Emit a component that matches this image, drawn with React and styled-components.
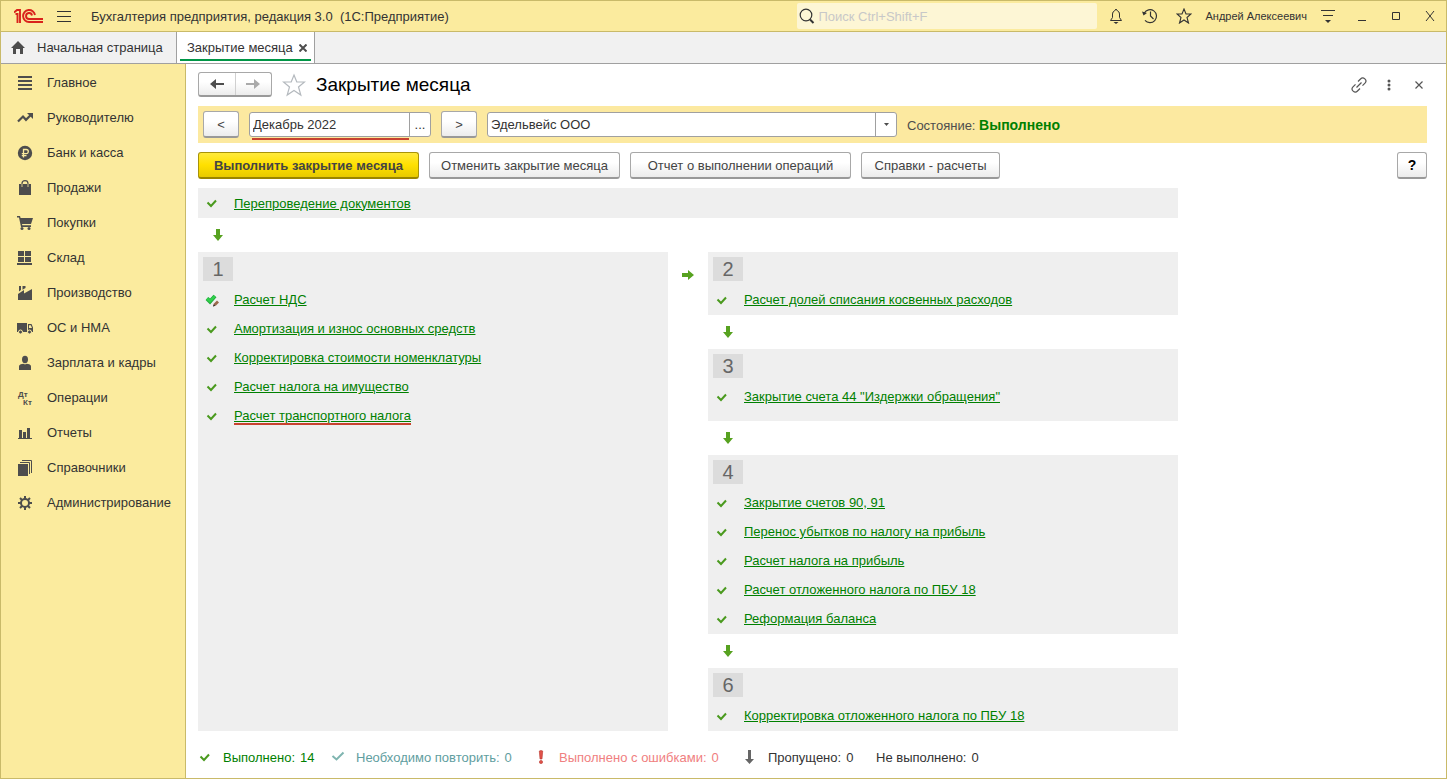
import React, { useState } from 'react';
import styled, { createGlobalStyle } from 'styled-components';

const GlobalStyle = createGlobalStyle`
  * {
    box-sizing: border-box;
  }

  body {
    margin: 0;
    font-family: "Liberation Sans", Arial, sans-serif;
    font-size: 13px;
    color: #333333;
    background: #ffffff;
  }

  button, input, select {
    font: inherit;
    color: inherit;
  }

  svg {
    display: block;
    flex: none;
  }
`;

const dark = '#4d4d4d';

const menuItems = [
  {
    title: 'Главное',
    icon: <path d="M1 1h14v2H1zM1 5h14v2H1zM1 9h14v2H1zM1 13h14v2H1z" />,
  },
  {
    title: 'Руководителю',
    icon: (
      <>
        <path d="M1 11.500L6 6.500L9 9.800L13.500 5.300" fill="none" stroke={dark} strokeWidth="2.200" />
        <path d="M10 3h6v6z" />
      </>
    ),
  },
  {
    title: 'Банк и касса',
    icon: (
      <>
        <circle cx="8" cy="8" r="7.200" />
        <path d="M6.500 12.500V4.500H9.200a2 2 0 0 1 0 4.200H4.800M4.800 10.600H9.500" fill="none" stroke="#fbeb9e" strokeWidth="1.300" />
      </>
    ),
  },
  {
    title: 'Продажи',
    icon: (
      <>
        <path d="M2 4h2v3h2V4h4v3h2V4h2v11H2z" />
        <path d="M5 7V3.500Q5 .7 8 .7t3 2.800V7" fill="none" stroke={dark} strokeWidth="1.200" />
      </>
    ),
  },
  {
    title: 'Покупки',
    icon: (
      <>
        <path d="M0 1h3l.6 2H16l-2 6H5l.3 1.300H14V12H4L2 2.500H0z" />
        <circle cx="5" cy="13.500" r="1.500" />
        <circle cx="12" cy="13.500" r="1.500" />
      </>
    ),
  },
  {
    title: 'Склад',
    icon: <path d="M1 1h6v5H1zM8 1h6v5H8zM1 7h6v5H1zM8 7h6v5H8zM0 13h15v2H0z" />,
  },
  {
    title: 'Производство',
    icon: <path d="M2 1h2v4l-2 1.500zM5.500 1h3v2l-3 1.800zM1 9l6-4v3.500L15 4v11H1z" />,
  },
  {
    title: 'ОС и НМА',
    icon: (
      <>
        <path d="M0 3h10v9H0zM11 4h3.500L16 7.500V12h-5z" />
        <path d="M12 5.200h1.800L15 8h-3z" fill="#fbeb9e" />
        <circle cx="3.500" cy="12" r="2" stroke="#fbeb9e" />
        <circle cx="12.500" cy="12" r="2" stroke="#fbeb9e" />
      </>
    ),
  },
  {
    title: 'Зарплата и кадры',
    icon: (
      <>
        <ellipse cx="8" cy="4.500" rx="3" ry="3.700" />
        <path d="M2 15v-3.500Q2 9.500 5 9l1.500-.3Q8 9.800 9.500 8.700L11 9q3 .5 3 2.500V15z" />
      </>
    ),
  },
  {
    title: 'Операции',
    icon: (
      <>
        <text x="1" y="7" fontSize="8" fontWeight="bold">Дт</text>
        <text x="6" y="15" fontSize="8" fontWeight="bold">Кт</text>
      </>
    ),
  },
  {
    title: 'Отчеты',
    icon: <path d="M2 5h3v8h1V7h3v6h1V3h3v10h2v1H1v-1h1z" />,
  },
  {
    title: 'Справочники',
    icon: (
      <>
        <path d="M1 4h10v12H1z" />
        <path d="M3 2.500h9.500V14M5 .5h9.500V13" fill="none" stroke={dark} />
      </>
    ),
  },
  {
    title: 'Администрирование',
    icon: (
      <>
        <circle cx="8" cy="8" r="4" fill="none" stroke={dark} strokeWidth="2" />
        <path
          d="M8 1v3M8 12v3M1 8h3M12 8h3M3 3l2 2M11 11l2 2M13 3l-2 2M5 11l-2 2"
          fill="none"
          stroke={dark}
          strokeWidth="2"
        />
      </>
    ),
  },
];

const firstStage = {
  number: 1,
  steps: [
    { title: 'Расчет НДС', edited: true },
    { title: 'Амортизация и износ основных средств' },
    { title: 'Корректировка стоимости номенклатуры' },
    { title: 'Расчет налога на имущество' },
    { title: 'Расчет транспортного налога', marked: true },
  ],
};

const nextStages = [
  { number: 2, steps: [{ title: 'Расчет долей списания косвенных расходов' }] },
  { number: 3, tall: true, steps: [{ title: 'Закрытие счета 44 "Издержки обращения"' }] },
  {
    number: 4,
    steps: [
      { title: 'Закрытие счетов 90, 91' },
      { title: 'Перенос убытков по налогу на прибыль' },
      { title: 'Расчет налога на прибыль' },
      { title: 'Расчет отложенного налога по ПБУ 18' },
      { title: 'Реформация баланса' },
    ],
  },
  { number: 6, steps: [{ title: 'Корректировка отложенного налога по ПБУ 18' }] },
];

const CheckIcon = ({ color = '#4a9a1e' }) => (
  <svg width="14" height="14" viewBox="0 0 14 14">
    <path d="M2.500 6.500L6 10L11 4.500" fill="none" stroke={color} strokeWidth="2" />
  </svg>
);

const RepeatIcon = () => (
  <svg width="14" height="14" viewBox="0 0 14 14">
    <path d="M1.500 6L5.500 9.500L12.500 2.500" fill="none" stroke="#7fb5b0" strokeWidth="2" />
  </svg>
);

const EditedIcon = () => (
  <svg width="14" height="14" viewBox="0 0 14 14">
    <path d="M2 5.500L5 8.500L10 3" fill="none" stroke="#1fa83a" strokeWidth="4" />
    <path d="M2 5.500L5 8.300L9.800 3.200" fill="none" stroke="#2fd04b" strokeWidth="2.500" />
    <path d="M8 13.500l1-3 3-3 2 2-3 3z" fill="#9b6a4d" />
    <path d="M8 13.500l.8-2.300 1.500 1.500z" fill="#333333" />
  </svg>
);

const ArrowDown = () => (
  <svg width="12" height="12" viewBox="0 0 12 12">
    <path d="M4 0h4v6h3L6 12L1 6h3z" fill="#57a220" />
  </svg>
);

const ArrowRight = () => (
  <svg width="12" height="12" viewBox="0 0 12 12">
    <path d="M0 4h6V1l6 5l-6 5V8H0z" fill="#57a220" />
  </svg>
);

const Logo = () => (
  <svg width="30" height="16" viewBox="0 0 30 16" fill="none" stroke="#d9231c">
    <path d="M0 4.500L3 2H6V15M1.500 6H3.500V15" strokeWidth="1.900" />
    <path d="M21 7A6 6 0 1 0 15 14H29" strokeWidth="1.900" />
    <path d="M18 7.500A3 3 0 1 0 15 11H29" strokeWidth="1.900" />
  </svg>
);

const Stage = ({ number, steps, tall }) => (
  <StagePanel $tall={tall}>
    <StageNumber>{number}</StageNumber>
    {steps.map(step => (
      <Step key={step.title}>
        {step.edited ? <EditedIcon /> : <CheckIcon />}
        <StepLink href="#" $marked={step.marked}>{step.title}</StepLink>
      </Step>
    ))}
  </StagePanel>
);

const App = () => {
  const [period, setPeriod] = useState('Декабрь 2022');

  return (
    <>
      <GlobalStyle />
      <Window>
        <TitleBar>
          <Logo />
          <IconButton aria-label="Меню" $size={16}>
            <svg width="14" height="11" viewBox="0 0 14 11" stroke="#333333">
              <path d="M0 .5h14M0 5.500h14M0 10.500h14" />
            </svg>
          </IconButton>
          <AppTitle>Бухгалтерия предприятия, редакция 3.0&nbsp; (1С:Предприятие)</AppTitle>
          <Search>
            <svg width="16" height="16" viewBox="0 0 16 16" fill="none" stroke="#333333">
              <circle cx="7" cy="7" r="5.800" strokeWidth="1.200" />
              <path d="M11 11.500l3.500 3.500" strokeWidth="2" />
            </svg>
            <input type="search" aria-label="Поиск" placeholder="Поиск Ctrl+Shift+F" />
          </Search>
          <TitleTools>
            <IconButton aria-label="Уведомления" $size={16}>
              <svg width="16" height="16" viewBox="0 0 16 16" fill="none" stroke="#333333">
                <path d="M2.500 12.500h11L11.500 9.500V6Q11.500 3.500 9.500 3L8 1L6.500 3Q4.500 3.500 4.500 6v3.500z" />
                <path d="M5.500 14h5L8 16z" fill="#333333" stroke="none" />
              </svg>
            </IconButton>
            <IconButton aria-label="История" $size={16}>
              <svg width="16" height="16" viewBox="0 0 16 16" fill="none" stroke="#333333" strokeWidth="1.200">
                <path d="M2.300 5A6.500 6.500 0 1 1 3 12.300M8.500 3.500V8l3 3" />
                <path d="M0 3.500L5 5L1.500 7.500z" fill="#333333" stroke="none" />
              </svg>
            </IconButton>
            <IconButton aria-label="Избранное" $size={16}>
              <svg width="16" height="16" viewBox="0 0 16 16" fill="none" stroke="#333333" strokeWidth="1.100">
                <path d="M8 1l2 5h5l-4 3.500 1.500 5.500L8 12l-4.500 3L5 9.500 1 6h5z" />
              </svg>
            </IconButton>
            <UserName>Андрей Алексеевич</UserName>
            <IconButton aria-label="Настройки" $size={16}>
              <svg width="16" height="14" viewBox="0 0 16 14">
                <path d="M1 1.500h14M3 6.500h10" stroke="#333333" />
                <path d="M5 11h6l-3 3z" fill="#333333" />
              </svg>
            </IconButton>
          </TitleTools>
          <WindowButtons>
            <IconButton aria-label="Свернуть" $size={16}>
              <svg width="10" height="10" viewBox="0 0 10 10">
                <path d="M1 9.500h8" stroke="#333333" />
              </svg>
            </IconButton>
            <IconButton aria-label="Развернуть" $size={16}>
              <svg width="10" height="10" viewBox="0 0 10 10">
                <path d="M1.500 1.500h7v7h-7z" fill="none" stroke="#333333" />
              </svg>
            </IconButton>
            <IconButton aria-label="Закрыть" $size={16}>
              <svg width="10" height="10" viewBox="0 0 10 10">
                <path d="M1 0l8 10M9 0L1 10" stroke="#333333" />
              </svg>
            </IconButton>
          </WindowButtons>
        </TitleBar>

        <Tabs>
          <Tab href="#">
            <svg width="14" height="13" viewBox="0 0 14 13">
              <path d="M7 0L14 7H12v6H9V8H5v5H2V7H0z" fill={dark} />
            </svg>
            Начальная страница
          </Tab>
          <ActiveTab>
            <a href="#">Закрытие месяца</a>
            <IconButton aria-label="Закрыть вкладку" $size={8}>
              <svg width="8" height="8" viewBox="0 0 8 8">
                <path d="M.5 .5l7 7M7.500 .5l-7 7" stroke={dark} strokeWidth="2" />
              </svg>
            </IconButton>
          </ActiveTab>
        </Tabs>

        <Body>
          <Sidebar>
            {menuItems.map(({ title, icon }) => (
              <MenuLink key={title} href="#">
                <svg width="16" height="16" viewBox="0 0 16 16" fill={dark}>{icon}</svg>
                {title}
              </MenuLink>
            ))}
          </Sidebar>

          <Main>
            <PageHeader>
              <HistoryButtons>
                <button type="button" aria-label="Назад">
                  <svg width="14" height="12" viewBox="0 0 14 12">
                    <path d="M0 6l6-5v4h8v2H6v4z" fill={dark} />
                  </svg>
                </button>
                <button type="button" aria-label="Вперед">
                  <svg width="14" height="12" viewBox="0 0 14 12">
                    <path d="M14 6L8 1v4H0v2h8v4z" fill="#aaaaaa" />
                  </svg>
                </button>
              </HistoryButtons>
              <IconButton aria-label="В избранное" $size={24}>
                <svg width="24" height="24" viewBox="0 0 24 24">
                  <path
                    d="M12 2l2.800 7H22.500l-6 5 2.300 8L12 17.500 5.200 22l2.300-8-6-5h7.700z"
                    fill="none"
                    stroke="#b4b9be"
                    strokeWidth="1.200"
                  />
                </svg>
              </IconButton>
              <h1>Закрытие месяца</h1>
              <PageTools>
                <IconButton aria-label="Ссылка" $size={16}>
                  <svg width="16" height="16" viewBox="0 0 16 16" fill="none" stroke="#555555" strokeWidth="1.200">
                    <path d="M7 4.500l2.500-2.500a2.800 2.800 0 0 1 4.500 4.200l-2.500 2.500M9 11.500l-2.500 2.500a2.800 2.800 0 0 1-4.500-4.200l2.500-2.500M5.500 10.500l5-5" />
                  </svg>
                </IconButton>
                <IconButton aria-label="Еще" $size={16}>
                  <svg width="4" height="12" viewBox="0 0 4 12" fill="#555555">
                    <circle cx="2" cy="2" r="1.500" />
                    <circle cx="2" cy="6" r="1.500" />
                    <circle cx="2" cy="10" r="1.500" />
                  </svg>
                </IconButton>
                <IconButton aria-label="Закрыть форму" $size={16}>
                  <svg width="8" height="8" viewBox="0 0 8 8">
                    <path d="M.5 .5l7 7M7.500 .5l-7 7" stroke="#555555" strokeWidth="1.200" />
                  </svg>
                </IconButton>
              </PageTools>
            </PageHeader>

            <FilterBar>
              <Button $width={36}>&lt;</Button>
              <PeriodField>
                <input
                  aria-label="Период"
                  value={period}
                  onChange={e => setPeriod(e.target.value)}
                />
                <button type="button">...</button>
              </PeriodField>
              <Button $width={36}>&gt;</Button>
              <CompanyField>
                <select aria-label="Организация">
                  <option>Эдельвейс ООО</option>
                </select>
                <SelectArrow>
                  <svg width="5" height="3" viewBox="0 0 5 3">
                    <path d="M0 0h5L2.500 3z" fill={dark} />
                  </svg>
                </SelectArrow>
              </CompanyField>
              <State>Состояние: <b>Выполнено</b></State>
            </FilterBar>

            <Actions>
              <Button $primary $width={221}>Выполнить закрытие месяца</Button>
              <Button $width={191}>Отменить закрытие месяца</Button>
              <Button $width={221}>Отчет о выполнении операций</Button>
              <Button $width={139}>Справки - расчеты</Button>
              <HelpButton $width={30}>?</HelpButton>
            </Actions>

            <Scheme>
              <TopStep>
                <CheckIcon />
                <StepLink href="#">Перепроведение документов</StepLink>
              </TopStep>
              <DownRow>
                <ArrowDown />
              </DownRow>
              <Columns>
                <Stage {...firstStage} />
                <BetweenColumns>
                  <ArrowRight />
                </BetweenColumns>
                <Stages>
                  {nextStages.map((stage, i) => (
                    <React.Fragment key={stage.number}>
                      {i > 0 && <DownRow><ArrowDown /></DownRow>}
                      <Stage {...stage} />
                    </React.Fragment>
                  ))}
                </Stages>
              </Columns>
            </Scheme>

            <Legend>
              <LegendItem $color="#008000">
                <CheckIcon />
                <span>Выполнено:</span>
                <span>14</span>
              </LegendItem>
              <LegendItem $color="#5f9ea0">
                <RepeatIcon />
                <span>Необходимо повторить:</span>
                <span>0</span>
              </LegendItem>
              <LegendItem $color="#f08080">
                <svg width="14" height="14" viewBox="0 0 14 14" fill="#e0524a" stroke="#b8342c" strokeWidth=".6">
                  <path d="M5.300 1q1.700-1 3.400 0L8 9H6z" />
                  <circle cx="7" cy="12" r="1.600" />
                </svg>
                <span>Выполнено с ошибками:</span>
                <span>0</span>
              </LegendItem>
              <LegendItem>
                <svg width="14" height="14" viewBox="0 0 14 14">
                  <path d="M5 0h3v9h3L6.500 14L2 9h3z" fill="#666666" />
                </svg>
                <span>Пропущено:</span>
                <span>0</span>
              </LegendItem>
              <LegendItem>
                <span>Не выполнено:</span>
                <span>0</span>
              </LegendItem>
            </Legend>
          </Main>
        </Body>
      </Window>
    </>
  );
};

const Window = styled.div`
  display: flex;
  flex-direction: column;
  min-height: 100vh;
  border: 1px solid #c9ba69;
`;

const TitleBar = styled.header`
  display: flex;
  align-items: center;
  height: 31px;
  padding: 0 8px 0 13px;
  background: #fbeb9e;
  border-bottom: 1px solid #c9ba69;
`;

const IconButton = styled.button.attrs({ type: 'button' })`
  display: flex;
  align-items: center;
  justify-content: center;
  flex: none;
  width: ${props => props.$size}px;
  height: ${props => props.$size}px;
  padding: 0;
  border: none;
  background: none;
  cursor: pointer;

  ${TitleBar} > & {
    margin: 0 19px 0 12px;
  }
`;

const AppTitle = styled.span`
  white-space: pre;
`;

const Search = styled.label`
  display: flex;
  align-items: center;
  gap: 3px;
  width: 300px;
  height: 26px;
  margin-left: auto;
  padding-left: 2px;
  border-radius: 2px;
  background: #fdf6d5;

  input {
    flex: 1;
    min-width: 0;
    padding: 0;
    border: none;
    outline: none;
    background: none;
  }

  input::placeholder {
    color: #c8c8c8;
  }
`;

const TitleTools = styled.div`
  display: flex;
  align-items: center;
  gap: 18px;
  margin-left: 11px;
`;

const UserName = styled.span`
  margin: 0 -5px;
  font-size: 11px;
  white-space: nowrap;
`;

const WindowButtons = styled.div`
  display: flex;
  gap: 18px;
  margin-left: 18px;
`;

const Tabs = styled.nav`
  display: flex;
  height: 32px;
  background: #f1f1f1;
  border-bottom: 1px solid #a0a0a0;

  a {
    color: inherit;
    text-decoration: none;
  }
`;

const Tab = styled.a`
  display: flex;
  align-items: center;
  gap: 12px;
  width: 175px;
  padding-left: 10px;
`;

const ActiveTab = styled.div`
  display: flex;
  align-items: center;
  gap: 6px;
  padding: 0 7px 0 10px;
  border: solid #a0a0a0;
  border-width: 0 1px;
  background: linear-gradient(#009646, #009646) center bottom 2px / calc(100% - 6px) 2px no-repeat #ffffff;
`;

const Body = styled.div`
  display: flex;
  flex: 1;
`;

const Sidebar = styled.nav`
  flex: none;
  width: 185px;
  padding-top: 1px;
  background: #fbeb9e;
  border-right: 1px solid #c9ba69;
`;

const MenuLink = styled.a`
  display: flex;
  align-items: center;
  gap: 14px;
  height: 35px;
  padding-left: 16px;
  color: #333333;
  text-decoration: none;
  white-space: nowrap;

  &:hover {
    background: #f7e07a;
  }
`;

const Main = styled.main`
  flex: 1;
  min-width: 0;
  padding: 8px 19px 12px 12px;
`;

const PageHeader = styled.div`
  display: flex;
  align-items: center;
  gap: 10px;
  height: 25px;

  h1 {
    margin: 0;
    font-size: 19px;
    font-weight: normal;
    color: #000000;
  }
`;

const HistoryButtons = styled.div`
  display: flex;
  width: 74px;
  height: 25px;
  border: 1px solid #a8a8a8;
  border-bottom: 2px solid #999999;
  border-radius: 3px;
  background: linear-gradient(#ffffff 40%, #ececec);

  button {
    display: flex;
    flex: 1;
    align-items: center;
    justify-content: center;
    padding: 0;
    border: none;
    background: none;
  }

  button + button {
    border-left: 1px solid #d0d0d0;
  }
`;

const PageTools = styled.div`
  display: flex;
  gap: 14px;
  margin-left: auto;
`;

const FilterBar = styled.div`
  display: flex;
  align-items: center;
  gap: 10px;
  height: 37px;
  margin-top: 9px;
  padding-left: 5px;
  background: #fce9a0;
`;

const Button = styled.button.attrs({ type: 'button' })`
  min-width: ${props => props.$width}px;
  height: 27px;
  padding: 0;
  border: 1px solid ${props => (props.$primary ? '#a89308' : '#a8a8a8')};
  border-bottom: 2px solid ${props => (props.$primary ? '#9a8500' : '#999999')};
  border-radius: 3px;
  background: ${props => (props.$primary
    ? 'linear-gradient(#ffea3c, #ffe000 50%, #e8ca00)'
    : 'linear-gradient(#ffffff 40%, #ececec)')};
  color: #444444;
  font-weight: ${props => (props.$primary ? 'bold' : 'normal')};
  white-space: nowrap;
  cursor: pointer;
`;

const HelpButton = styled(Button)`
  margin-left: auto;
  color: #000000;
  font-size: 14px;
  font-weight: bold;
`;

const PeriodField = styled.div`
  position: relative;
  display: flex;
  width: 182px;
  height: 25px;
  border: 1px solid #a0a0a0;
  border-radius: 3px;
  background: #ffffff;

  input {
    flex: 1;
    min-width: 0;
    padding: 0 3px;
    border: none;
    outline: none;
    background: none;
  }

  button {
    width: 21px;
    padding: 0;
    border: none;
    border-left: 1px solid #a0a0a0;
    background: none;
  }

  /* red marker under the month */
  &::after {
    content: "";
    position: absolute;
    left: 2px;
    right: 21px;
    bottom: -4px;
    height: 2px;
    background: #c8432f;
  }
`;

const CompanyField = styled.div`
  display: grid;
  width: 410px;
  height: 25px;
  border: 1px solid #a0a0a0;
  border-radius: 3px;
  background: #ffffff;

  select {
    grid-area: 1 / 1;
    padding: 0 24px 0 3px;
    border: none;
    outline: none;
    background: none;
    appearance: none;
  }
`;

const SelectArrow = styled.span`
  display: flex;
  grid-area: 1 / 1;
  align-items: center;
  justify-content: center;
  justify-self: end;
  width: 21px;
  border-left: 1px solid #a0a0a0;
  pointer-events: none;
`;

const State = styled.span`
  color: #4d4d4d;
  white-space: nowrap;

  b {
    color: #008000;
    font-size: 14px;
  }
`;

const Actions = styled.div`
  display: flex;
  gap: 10px;
  margin-top: 9px;
`;

const Scheme = styled.div`
  max-width: 980px;
  margin-top: 9px;
`;

const Step = styled.div`
  display: flex;
  align-items: center;
  gap: 15px;
  height: 29px;
  padding-left: 7px;
`;

const TopStep = styled(Step)`
  height: 30px;
  background: #efefef;
`;

const StepLink = styled.a`
  position: relative;
  color: #008000;

  &::after {
    content: ${props => (props.$marked ? '""' : 'none')};
    position: absolute;
    left: 0;
    right: 0;
    bottom: -2px;
    height: 2px;
    background: #c8432f;
  }
`;

const DownRow = styled.div`
  display: flex;
  align-items: center;
  height: 34px;
  padding-left: 14px;
`;

const Columns = styled.div`
  display: grid;
  grid-template-columns: 1fr 40px 1fr;
`;

const BetweenColumns = styled.div`
  padding: 17px 0 0 14px;
`;

const Stages = styled.div`
  display: flex;
  flex-direction: column;
`;

const StagePanel = styled.section`
  padding: 5px 0 ${props => (props.$tall ? 10 : 1)}px;
  background: #efefef;
`;

const StageNumber = styled.div`
  width: 30px;
  height: 24px;
  margin: 0 0 4px 5px;
  background: #dcdcdc;
  color: #666666;
  font-size: 20px;
  line-height: 24px;
  text-align: center;
`;

const Legend = styled.footer`
  display: grid;
  grid-template-columns: 133px 203px 209px 133px auto;
  margin-top: 18px;
`;

const LegendItem = styled.div`
  display: flex;
  align-items: center;
  gap: 5px;
  height: 16px;
  color: ${props => props.$color || '#333333'};
  white-space: nowrap;

  svg {
    margin-right: 6px;
  }
`;

export default App;
